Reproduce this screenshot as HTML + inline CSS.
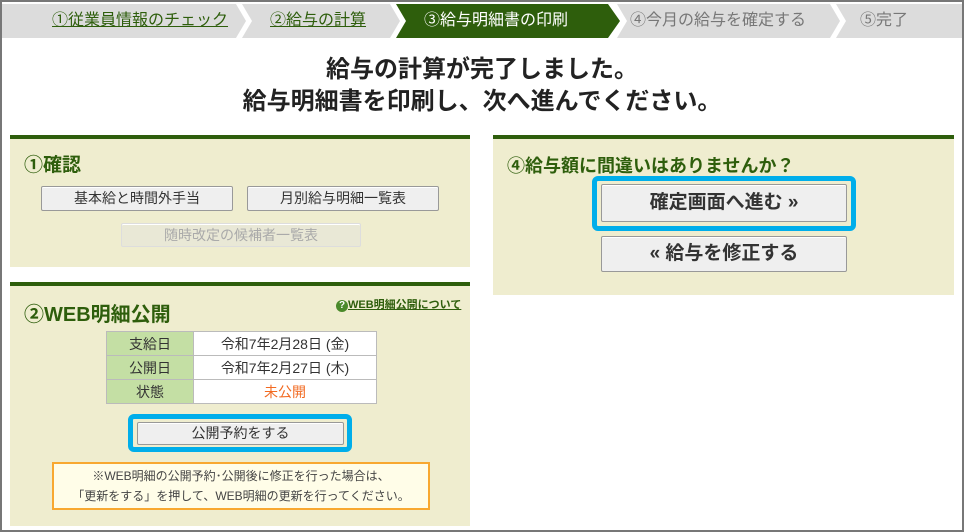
<!DOCTYPE html>
<html><head><meta charset="utf-8"><style>
*{margin:0;padding:0;box-sizing:border-box}
body{width:964px;height:532px;background:#fff;position:relative;overflow:hidden;font-family:"Liberation Sans","Noto Sans CJK JP",sans-serif;color:#333}
.frame{position:absolute;left:0;top:0;width:964px;height:532px;border:2px solid #777}
.a{position:absolute}
.st{position:absolute;top:4px;height:34px;line-height:34px;font-size:16px;white-space:nowrap}
.panel{position:absolute;background:#efedcf;border-top:4px solid #2e5e0c}
.h{position:absolute;color:#2e5e0c;font-weight:bold}
.btn{position:absolute;background:#efefef;border:1px solid #999;border-radius:2px;text-align:center;color:#333;box-shadow:inset 0 1px 0 #fff}
.hl{position:absolute;border:5px solid #00aeea;border-radius:6px}
table{border-collapse:collapse;position:absolute;font-size:14px}
td{border:1px solid #bbb;height:24px;text-align:center}
td.k{background:#c4dfa4;width:87px}
td.v{background:#fff;width:183px}
</style></head><body>
<svg class="a" style="left:0;top:0" width="964" height="40">
<polygon points="2,4 236,4 246,21 236,38 2,38" fill="#dcdcdc"/>
<polygon points="242,4 390,4 400,21 390,38 242,38 252,21" fill="#dcdcdc"/>
<polygon points="396,4 608,4 620,21 608,38 396,38 406,21" fill="#2e5e0c"/>
<polygon points="617,4 830,4 840,21 830,38 617,38 627,21" fill="#dcdcdc"/>
<polygon points="836,4 962,4 962,38 836,38 846,21" fill="#dcdcdc"/>
</svg>
<div class="st" style="left:52px;color:#2e5e0c;text-decoration:underline">①従業員情報のチェック</div>
<div class="st" style="left:270px;color:#2e5e0c;text-decoration:underline">②給与の計算</div>
<div class="st" style="left:424px;color:#fff">③給与明細書の印刷</div>
<div class="st" style="left:630px;color:#777">④今月の給与を確定する</div>
<div class="st" style="left:860px;color:#777">⑤完了</div>
<div class="a" style="left:0;top:54px;width:964px;text-align:center;font-size:24px;font-weight:bold;line-height:32px;color:#222">給与の計算が完了しました。<br>給与明細書を印刷し、次へ進んでください。</div>

<div class="panel" style="left:10px;top:135px;width:460px;height:132px"></div>
<div class="h" style="left:24px;top:150px;font-size:19px">①確認</div>
<div class="btn" style="left:41px;top:186px;width:192px;height:25px;line-height:23px;font-size:14px">基本給と時間外手当</div>
<div class="btn" style="left:247px;top:186px;width:192px;height:25px;line-height:23px;font-size:14px">月別給与明細一覧表</div>
<div class="btn" style="left:121px;top:223px;width:240px;height:24px;line-height:22px;font-size:14px;color:#aaa;background:#e9e8d6;border-color:#ddd">随時改定の候補者一覧表</div>

<div class="panel" style="left:10px;top:282px;width:460px;height:244px"></div>
<div class="h" style="left:24px;top:298px;font-size:20px">②WEB明細公開</div>
<div class="a" style="left:336px;top:296px;font-size:11px;font-weight:bold;color:#2e5e0c;text-decoration:underline"><span style="display:inline-block;width:12px;height:12px;border-radius:6px;background:#4a8a2a;color:#fff;text-align:center;line-height:12px;font-size:10px;text-decoration:none">?</span>WEB明細公開について</div>
<table style="left:106px;top:331px">
<tr><td class="k">支給日</td><td class="v">令和7年2月28日 (金)</td></tr>
<tr><td class="k">公開日</td><td class="v">令和7年2月27日 (木)</td></tr>
<tr><td class="k">状態</td><td class="v" style="color:#f26a21">未公開</td></tr>
</table>
<div class="hl" style="left:128px;top:414px;width:224px;height:38px"></div>
<div class="btn" style="left:137px;top:422px;width:207px;height:23px;line-height:21px;font-size:14px">公開予約をする</div>
<div class="a" style="left:52px;top:462px;width:378px;height:48px;border:2px solid #f8a830;background:#fffde8;text-align:center;font-size:12px;line-height:20px;padding-top:2px;color:#444">※WEB明細の公開予約･公開後に修正を行った場合は、<br>「更新をする」を押して、WEB明細の更新を行ってください。</div>

<div class="panel" style="left:493px;top:135px;width:461px;height:160px"></div>
<div class="h" style="left:507px;top:152px;font-size:18px">④給与額に間違いはありませんか？</div>
<div class="hl" style="left:592px;top:176px;width:264px;height:55px"></div>
<div class="btn" style="left:601px;top:184px;width:246px;height:38px;line-height:36px;font-size:19px;font-weight:bold">確定画面へ進む »</div>
<div class="btn" style="left:601px;top:236px;width:246px;height:36px;line-height:34px;font-size:19px;font-weight:bold">« 給与を修正する</div>
<div class="frame"></div>
</body></html>
